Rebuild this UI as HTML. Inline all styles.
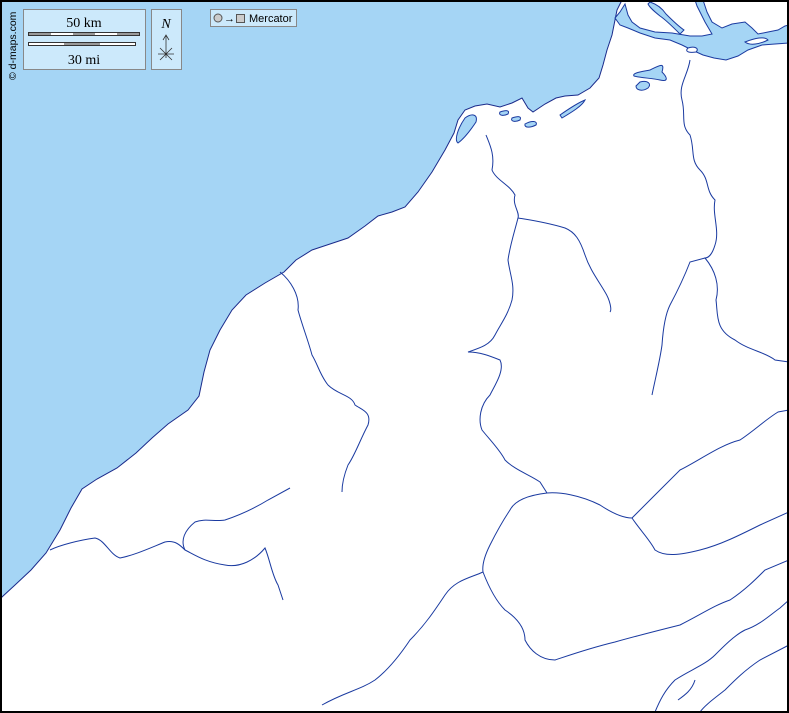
<!DOCTYPE html>
<html><head><style>
html,body{margin:0;padding:0;background:#fff}
svg{display:block}
</style></head><body>
<svg width="789" height="713" viewBox="0 0 789 713" xmlns="http://www.w3.org/2000/svg">
<rect x="0" y="0" width="789" height="713" fill="#fff"/>
<path d="M0,0 L622,0 L617,10 L615,20 L612,35 L607,50 L603,65 L599,78 L590,88 L578,95 L565,96 L556,98 L545,104 L533,112 L528,108 L522,98 L512,103 L500,107 L487,104 L475,106 L465,110 L458,120 L454,133 L445,150 L432,172 L418,192 L405,207 L392,212 L378,216 L365,226 L348,238 L330,244 L312,250 L296,260 L284,272 L265,283 L246,295 L232,310 L220,330 L210,350 L204,372 L199,396 L188,410 L168,424 L152,438 L136,453 L117,468 L97,479 L82,489 L71,508 L60,530 L46,553 L31,570 L15,585 L2,597 L0,600 Z" fill="#a5d5f5" stroke="#1a2a8a" stroke-width="1"/>
<g fill="#a5d5f5" stroke="#1a3aa0" stroke-width="1">
<path d="M615,18 L620,12 L625,4 L628,15 L632,22 L640,28 L655,32 L672,33 L690,36 L702,36 L712,34 L705,22 L697,6 L695,0 L703,0 L707,12 L712,22 L722,28 L732,24 L745,22 L752,28 L758,34 L768,32 L778,30 L785,26 L789,25 L789,43 L775,44 L762,45 L748,50 L738,56 L726,60 L714,58 L703,55 L692,50 L682,45 L670,40 L655,38 L640,33 L628,28 L620,25 Z"/>
<path d="M650,2 C656,4 662,8 666,14 C672,20 678,26 684,30 L680,34 C674,28 666,20 660,16 C655,12 650,8 648,4 Z"/>
<path d="M650,70 C660,65 665,62 662,72 C668,78 668,82 660,80 C652,78 640,78 634,76 C632,73 640,72 650,70 Z"/>
<path d="M640,82 C648,80 652,84 648,88 C642,92 636,90 636,86 Z"/>
<path d="M465,118 C472,113 478,114 476,122 C472,128 465,138 458,143 C454,140 458,128 465,118 Z"/>
<path d="M500,112 C506,110 510,110 508,114 C504,116 498,116 500,112 Z"/>
<path d="M512,118 C518,116 522,116 520,120 C516,122 510,122 512,118 Z"/>
<path d="M525,124 C532,120 538,121 536,125 C530,128 524,128 525,124 Z"/>
<path d="M560,115 C570,108 580,102 585,100 C582,106 572,112 562,118 Z"/>
</g>
<g fill="#fff" stroke="#1a3aa0" stroke-width="1">
<path d="M688,48 C694,46 700,48 696,52 C690,53 684,52 688,48 Z"/>
<path d="M745,42 C755,38 765,36 768,40 C760,44 750,46 745,42 Z"/>
</g>
<g fill="none" stroke="#1a3aa0" stroke-width="1">
<path d="M690,60 C688,75 678,85 682,100 C686,115 680,125 690,135 C695,150 690,160 700,170 C710,180 705,190 715,200 C712,215 720,230 715,245 C712,255 708,258 705,258 C715,270 720,285 716,300 C718,315 715,330 735,340 C748,350 765,352 775,360 L789,362"/>
<path d="M486,135 C490,145 495,155 492,170 C496,180 510,185 515,195 C512,205 520,212 518,218 C530,220 545,222 565,228 C575,232 580,240 585,255 C590,270 598,280 605,292 C610,300 612,310 610,312"/>
<path d="M518,218 C515,230 510,245 508,260 C510,275 515,285 512,300 C508,315 500,325 495,335 C490,345 480,348 468,352 C480,352 490,356 500,360 C505,370 495,385 490,395 C480,405 478,420 482,430 C490,440 500,450 505,460 C515,470 530,475 540,482 L547,493"/>
<path d="M280,272 C290,280 300,295 298,310 C302,325 308,340 312,355 C318,365 320,375 328,385 C338,395 352,395 355,405 C362,410 372,412 368,425 C360,440 355,455 348,465 C344,475 342,485 342,492"/>
<path d="M547,493 C560,492 580,495 600,505 C615,515 625,518 632,518 C650,500 660,490 680,470 C700,460 720,445 740,440 C755,430 765,420 778,412 L789,410"/>
<path d="M632,518 C640,530 650,540 655,550 C665,557 680,555 700,550 C720,545 740,535 760,525 L789,512"/>
<path d="M547,493 C530,495 515,500 510,510 C500,525 495,535 490,545 C485,555 482,565 483,572 C470,578 455,580 445,595 C435,610 425,625 410,640 C400,655 388,670 375,680 C360,690 345,692 322,705"/>
<path d="M483,572 C488,585 495,600 505,610 C520,620 525,630 525,640 C530,650 540,660 555,660 C570,655 590,648 615,642 C640,635 660,630 680,625 C700,615 715,605 730,600 C745,590 755,580 765,570 L789,560"/>
<path d="M50,550 C60,545 80,540 95,538 C105,540 110,555 120,558 C135,555 150,548 165,542 C175,540 180,545 185,550 C195,555 205,562 225,565 C240,568 255,560 265,548 C270,560 272,575 278,585 L283,600"/>
<path d="M185,550 C180,540 185,530 195,522 C205,518 215,522 225,520 C240,515 255,508 268,500 L290,488"/>
<path d="M652,395 C655,380 660,360 662,345 C663,330 665,315 670,305 C678,290 685,275 690,262 L705,258"/>
<path d="M655,712 C660,700 665,690 675,680 C690,670 705,665 715,655 C725,645 735,635 745,630 C760,625 770,615 780,608 L789,600"/>
<path d="M700,712 C705,705 715,698 725,690 C735,680 745,670 760,660 L789,645"/>
<path d="M678,700 C685,695 692,690 695,680"/>
</g>
<rect x="1" y="1" width="787" height="711" fill="none" stroke="#000" stroke-width="2"/>
<rect x="23.5" y="9.5" width="122" height="60" fill="#cce9fb" stroke="#888"/>
<text x="84" y="27" font-family="Liberation Serif,serif" font-size="14" text-anchor="middle">50 km</text>
<rect x="28.5" y="32.5" width="111" height="3" fill="#fff" stroke="#333"/>
<rect x="29" y="33" width="22" height="2" fill="#999"/><rect x="73" y="33" width="22" height="2" fill="#999"/><rect x="117" y="33" width="22" height="2" fill="#999"/>
<rect x="28.5" y="42.5" width="107" height="3" fill="#fff" stroke="#333"/>
<rect x="64" y="43" width="36" height="2" fill="#999"/>
<text x="84" y="64" font-family="Liberation Serif,serif" font-size="14" text-anchor="middle">30 mi</text>
<rect x="151.5" y="9.5" width="30" height="60" fill="#cce9fb" stroke="#888"/>
<text x="166" y="28" font-family="Liberation Serif,serif" font-size="14" font-style="italic" text-anchor="middle">N</text>
<path d="M166,58 L166,36 M163,40 L166,35 L169,40 M158,54 L174,54 M160,48 L172,60 M172,48 L160,60" stroke="#333" fill="none" stroke-width="0.8"/>
<rect x="210.5" y="9.5" width="86" height="17" fill="#cce9fb" stroke="#888"/>
<circle cx="218" cy="18" r="4" fill="#ccc" stroke="#555"/>
<text x="224" y="22" font-family="Liberation Sans,sans-serif" font-size="11">→</text>
<rect x="236.5" y="14.5" width="8" height="8" fill="#ccc" stroke="#555"/>
<text x="249" y="22" font-family="Liberation Sans,sans-serif" font-size="11">Mercator</text>
<text transform="translate(16,80) rotate(-90)" font-family="Liberation Sans,sans-serif" font-size="10.5">© d-maps.com</text>
</svg>
</body></html>
